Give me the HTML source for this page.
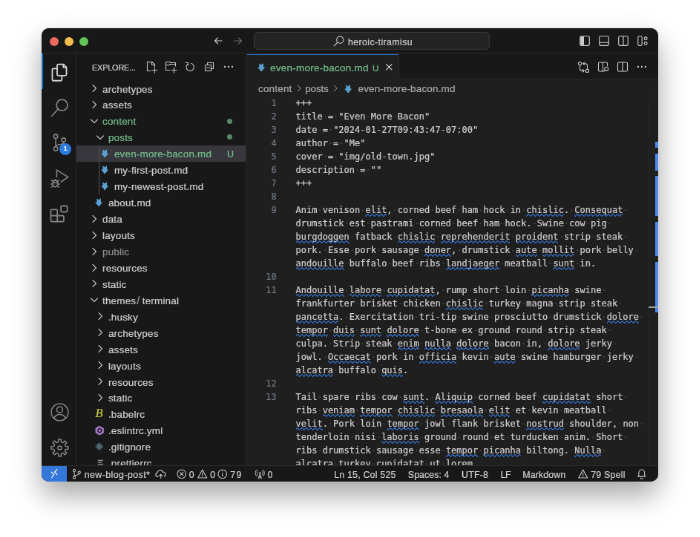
<!DOCTYPE html>
<html lang="en"><head><meta charset="utf-8"><title>heroic-tiramisu</title>
<style>
html,body{margin:0;padding:0;background:#fff;}
body{width:700px;height:537px;overflow:hidden;position:relative;font-family:"Liberation Sans",sans-serif;}
#sc{will-change:transform;position:absolute;left:0;top:0;width:943.40px;height:723.72px;transform:scale(0.742);transform-origin:0 0;}
#win{position:absolute;left:55.80px;top:38.27px;width:831.40px;height:611.05px;border-radius:10px;background:#1f1f1f;overflow:hidden;}
#sh{position:absolute;left:55.80px;top:38.27px;width:831.40px;height:611.05px;border-radius:10px;box-shadow:0 0 0 0.6px rgba(245,245,245,.55),0 18px 38px rgba(0,0,0,.36),0 0 2px rgba(0,0,0,.35);}
.b{position:absolute;}
.t{position:absolute;white-space:pre;line-height:20px;height:20px;-webkit-text-stroke:0.24px currentColor;}
.i{position:absolute;overflow:visible;}
.code{font-family:"DejaVu Sans Mono","Liberation Mono",monospace;font-size:12px;letter-spacing:0;color:#cccccc;}
.ln{font-family:"DejaVu Sans Mono","Liberation Mono",monospace;font-size:12px;color:#6e7681;text-align:right;}
.s{background:radial-gradient(circle at 50% 52%,#4a4a4a 0.7px,rgba(74,74,74,0) 1.2px);}
</style></head><body>
<div id="sc"><div id="sh"></div><div id="win">
<div class="b" style="left:0.00px;top:0.00px;width:831.40px;height:33.56px;background:#181818;"></div>
<div class="b" style="left:0.00px;top:32.56px;width:831.40px;height:1.00px;background:#2b2b2b;"></div>
<div class="b" style="left:0.00px;top:33.56px;width:47.04px;height:555.32px;background:#181818;"></div>
<div class="b" style="left:46.04px;top:33.56px;width:1.00px;height:555.32px;background:#2b2b2b;"></div>
<div class="b" style="left:47.04px;top:33.56px;width:229.18px;height:555.32px;background:#181818;"></div>
<div class="b" style="left:275.22px;top:33.56px;width:1.00px;height:555.32px;background:#2b2b2b;"></div>
<div class="b" style="left:276.21px;top:33.56px;width:555.19px;height:35.04px;background:#181818;"></div>
<div class="b" style="left:276.21px;top:67.60px;width:555.19px;height:1.00px;background:#2b2b2b;"></div>
<div class="b" style="left:276.21px;top:33.56px;width:205.73px;height:35.04px;background:#1f1f1f;"></div>
<div class="b" style="left:276.75px;top:34.64px;width:205.19px;height:1.21px;background:#2a6fc6;"></div>
<div class="b" style="left:480.94px;top:33.56px;width:1.00px;height:35.04px;background:#2b2b2b;"></div>
<div class="b" style="left:11.32px;top:11.65px;width:12px;height:12px;border-radius:50%;background:#ee6a5f;"></div>
<div class="b" style="left:31.26px;top:11.65px;width:12px;height:12px;border-radius:50%;background:#f5bd4f;"></div>
<div class="b" style="left:51.14px;top:11.65px;width:12px;height:12px;border-radius:50%;background:#61c454;"></div>
<svg class="i" style="left:230.68px;top:8.98px;color:#cccccc;" width="16" height="16" viewBox="0 0 16 16" fill="none" stroke="currentColor" stroke-width="1.1" stroke-linecap="round" stroke-linejoin="round"><path d="M13 8H3.5M7.5 4L3.5 8l4 4"/></svg>
<svg class="i" style="left:256.96px;top:8.98px;color:#6b6b6b;" width="16" height="16" viewBox="0 0 16 16" fill="none" stroke="currentColor" stroke-width="1.1" stroke-linecap="round" stroke-linejoin="round"><path d="M3 8h9.5M8.5 4l4 4-4 4"/></svg>
<div class="b" style="left:286.12px;top:5.12px;width:317.79px;height:23.99px;background:#242424;border:1px solid #3a3a3a;border-radius:6px;box-sizing:border-box;"></div>
<svg class="i" style="left:392.04px;top:8.48px;color:#cccccc;" width="17" height="17" viewBox="0 0 16 16" fill="none" stroke="currentColor" stroke-width="1.05" stroke-linecap="round" stroke-linejoin="round"><circle cx="9.700" cy="6.300" r="4.300"/><path d="M6.600 9.400L2 14"/></svg>
<span class="t " style="left:413.21px;top:8.67px;font-size:12.40px;letter-spacing:0.384px;color:#cccccc;">heroic-tiramisu</span>
<svg class="i" style="left:724.35px;top:8.31px;color:#cccccc;" width="16" height="16" viewBox="0 0 16 16" fill="none" stroke="currentColor" stroke-width="1.15" stroke-linecap="round" stroke-linejoin="round"><rect x="1.700" y="1.700" width="12.600" height="12.600" rx="2"/><path d="M2.200 2.200h4.800v11.600H2.200z" fill="currentColor" stroke="none"/></svg>
<svg class="i" style="left:750.49px;top:8.31px;color:#cccccc;" width="16" height="16" viewBox="0 0 16 16" fill="none" stroke="currentColor" stroke-width="1.15" stroke-linecap="round" stroke-linejoin="round"><rect x="1.700" y="1.700" width="12.600" height="12.600" rx="2"/><path d="M2 10.200h12"/></svg>
<svg class="i" style="left:776.64px;top:8.31px;color:#cccccc;" width="16" height="16" viewBox="0 0 16 16" fill="none" stroke="currentColor" stroke-width="1.15" stroke-linecap="round" stroke-linejoin="round"><rect x="1.700" y="1.700" width="12.600" height="12.600" rx="2"/><path d="M8 1.700v12.600"/></svg>
<svg class="i" style="left:802.65px;top:8.31px;color:#cccccc;" width="16" height="16" viewBox="0 0 16 16" fill="none" stroke="currentColor" stroke-width="1.15" stroke-linecap="round" stroke-linejoin="round"><rect x="1.800" y="1.700" width="5.400" height="12.600" rx="1.800"/><circle cx="12.200" cy="4.700" r="1.900"/><circle cx="12.200" cy="11.500" r="1.900"/></svg>
<div class="b" style="left:0.00px;top:34.23px;width:2.02px;height:47.98px;background:#0078d4;"></div>
<svg class="i" style="left:10.76px;top:45.26px;color:#d7d7d7;" width="27" height="27" viewBox="0 0 24 24" fill="none" stroke="currentColor" stroke-width="1.6" stroke-linecap="round" stroke-linejoin="round"><path d="M10.200 2.400h6.300l3.500 3.500v8.600a1.300 1.300 0 0 1-1.300 1.300h-8.500a1.300 1.300 0 0 1-1.300-1.300V3.700a1.300 1.300 0 0 1 1.300-1.300z"/><path d="M16.300 2.600v3.500h3.500"/><path d="M8.700 7.400H4.400a1.300 1.300 0 0 0-1.300 1.300v12a1.300 1.300 0 0 0 1.300 1.300h8.800a1.300 1.300 0 0 0 1.300-1.300v-4.700"/></svg>
<svg class="i" style="left:11.03px;top:93.24px;color:#868686;" width="27" height="27" viewBox="0 0 24 24" fill="none" stroke="currentColor" stroke-width="1.5" stroke-linecap="round" stroke-linejoin="round"><circle cx="14.750" cy="8.500" r="6.600"/><path d="M10 13.300L2.500 21.600"/></svg>
<svg class="i" style="left:10.76px;top:141.22px;color:#868686;" width="27" height="27" viewBox="0 0 24 24" fill="none" stroke="currentColor" stroke-width="1.4" stroke-linecap="round" stroke-linejoin="round"><circle cx="7.200" cy="4.300" r="2.400"/><circle cx="7.200" cy="19.100" r="2.400"/><circle cx="16.600" cy="8.500" r="2.400"/><path d="M7.200 6.700v10"/><path d="M16.600 10.900v.8c0 3.400-9.400 1-9.400 4.800"/></svg>
<div class="b" style="left:24.08px;top:154.40px;width:16px;height:16px;border-radius:50%;background:#2b7ce0;"></div>
<span class="t " style="left:29.78px;top:151.93px;font-size:9.50px;letter-spacing:0.000px;color:#ffffff;font-weight:bold;-webkit-text-stroke:0;">1</span>
<svg class="i" style="left:10.76px;top:189.20px;color:#868686;" width="27" height="27" viewBox="0 0 24 24" fill="none" stroke="currentColor" stroke-width="1.35" stroke-linecap="round" stroke-linejoin="round"><path d="M8.400 10.200V1.800L22 10.400l-8.400 5.600"/><ellipse cx="6.600" cy="18.200" rx="2.900" ry="3.800"/><path d="M3.900 17.200h5.400M3.700 18.600H1.300M9.500 18.600h2.400M4 15.800l-1.800-1.700M9.200 15.800l1.800-1.700M4 20.900l-1.800 1.500M9.200 20.900l1.800 1.500M4.800 14.800a1.900 1.900 0 0 1 3.600 0"/></svg>
<svg class="i" style="left:9.95px;top:237.04px;color:#868686;" width="27" height="27" viewBox="0 0 24 24" fill="none" stroke="currentColor" stroke-width="1.55" stroke-linecap="round" stroke-linejoin="round"><path d="M3.500 6.500h5.200a1.300 1.300 0 0 1 1.300 1.300v6h6.400a1.300 1.300 0 0 1 1.300 1.300v4.700a1.300 1.300 0 0 1-1.300 1.300H3.500a1.300 1.300 0 0 1-1.300-1.300V7.800a1.300 1.300 0 0 1 1.300-1.300z"/><path d="M2.200 13.800h7.800v7.300"/><rect x="14.300" y="2.200" width="7.600" height="7.200" rx="1.400"/></svg>
<svg class="i" style="left:10.76px;top:503.89px;color:#868686;" width="27" height="27" viewBox="0 0 24 24" fill="none" stroke="currentColor" stroke-width="1.35" stroke-linecap="round" stroke-linejoin="round"><circle cx="12" cy="12" r="10.200"/><circle cx="12" cy="9" r="3.500"/><path d="M5.200 19.500c1-3.300 3.600-4.800 6.800-4.800s5.800 1.500 6.800 4.800"/></svg>
<svg class="i" style="left:10.76px;top:551.86px;color:#868686;" width="27" height="27" viewBox="0 0 24 24" fill="none" stroke="currentColor" stroke-width="1.35" stroke-linecap="round" stroke-linejoin="round"><path d="M10.32 5.00L10.47 1.81L13.53 1.81L13.68 5.00L15.76 5.86L18.12 3.71L20.29 5.88L18.14 8.24L19.00 10.32L22.19 10.47L22.19 13.53L19.00 13.68L18.14 15.76L20.29 18.12L18.12 20.29L15.76 18.14L13.68 19.00L13.53 22.19L10.47 22.19L10.32 19.00L8.24 18.14L5.88 20.29L3.71 18.12L5.86 15.76L5.00 13.68L1.81 13.53L1.81 10.47L5.00 10.32L5.86 8.24L3.71 5.88L5.88 3.71L8.24 5.86Z"/><circle cx="12" cy="12" r="2.300"/></svg>
<span class="t " style="left:68.19px;top:42.56px;font-size:11.00px;letter-spacing:-0.251px;color:#cccccc;">EXPLORE...</span>
<svg class="i" style="left:140.11px;top:43.89px;color:#c5c5c5;" width="16" height="16" viewBox="0 0 16 16" fill="none" stroke="currentColor" stroke-width="1.1" stroke-linecap="round" stroke-linejoin="round"><path d="M9 1.500H2.500v12H7M9 1.500L12.500 5v2.500M8.500 1.500v4h4"/><path d="M12.500 9v7M9 12.500h7"/></svg>
<svg class="i" style="left:166.12px;top:43.89px;color:#c5c5c5;" width="16" height="16" viewBox="0 0 16 16" fill="none" stroke="currentColor" stroke-width="1.1" stroke-linecap="round" stroke-linejoin="round"><path d="M14.500 7V2.500H7.700l-1-1H1.500v11H7M1.500 5.500h5l1-1h7"/><path d="M12.500 9v7M9 12.500h7"/></svg>
<svg class="i" style="left:192.13px;top:43.89px;color:#c5c5c5;" width="16" height="16" viewBox="0 0 16 16" fill="none" stroke="currentColor" stroke-width="1.1" stroke-linecap="round" stroke-linejoin="round"><path d="M2 2.500h3.500V6"/><path d="M5 4.200a5.200 5.200 0 1 0 4.500-.9"/></svg>
<svg class="i" style="left:218.15px;top:43.89px;color:#c5c5c5;" width="16" height="16" viewBox="0 0 16 16" fill="none" stroke="currentColor" stroke-width="1.1" stroke-linecap="round" stroke-linejoin="round"><path d="M2.500 5.500h8v8h-8z"/><path d="M5.500 5.500V2.500h8v8h-3"/><path d="M4.300 9.500h4.400"/></svg>
<svg class="i" style="left:244.16px;top:44.16px;color:#d0d0d0;" width="16" height="16" viewBox="0 0 16 16" fill="none" stroke="currentColor" stroke-width="1.0" stroke-linecap="round" stroke-linejoin="round"><circle cx="3" cy="8" r="1.150" fill="currentColor" stroke="none"/><circle cx="8" cy="8" r="1.150" fill="currentColor" stroke="none"/><circle cx="13" cy="8" r="1.150" fill="currentColor" stroke="none"/></svg>
<div class="b" style="left:47.04px;top:157.67px;width:228.18px;height:21.94px;background:#37373d;"></div>
<div class="b" style="left:76.89px;top:157.67px;width:1.01px;height:65.83px;background:#585858;"></div>
<svg class="i" style="left:63.02px;top:72.86px;color:#c5c5c5;" width="16" height="16" viewBox="0 0 16 16" fill="none" stroke="currentColor" stroke-width="1.1" stroke-linecap="round" stroke-linejoin="round"><path d="M6 3.500l4.500 4.500L6 12.500"/></svg>
<span class="t " style="left:82.21px;top:72.28px;font-size:13.50px;letter-spacing:0.160px;color:#cccccc;">archetypes</span>
<svg class="i" style="left:63.02px;top:94.81px;color:#c5c5c5;" width="16" height="16" viewBox="0 0 16 16" fill="none" stroke="currentColor" stroke-width="1.1" stroke-linecap="round" stroke-linejoin="round"><path d="M6 3.500l4.500 4.500L6 12.500"/></svg>
<span class="t " style="left:82.21px;top:94.22px;font-size:13.50px;letter-spacing:0.160px;color:#cccccc;">assets</span>
<svg class="i" style="left:63.02px;top:116.75px;color:#c5c5c5;" width="16" height="16" viewBox="0 0 16 16" fill="none" stroke="currentColor" stroke-width="1.1" stroke-linecap="round" stroke-linejoin="round"><path d="M3.5 6l4.500 4.500L12.500 6"/></svg>
<span class="t " style="left:82.21px;top:116.17px;font-size:13.50px;letter-spacing:0.160px;color:#74bd8b;">content</span>
<div class="b" style="left:250.41px;top:121.25px;width:7px;height:7px;border-radius:50%;background:#588a66;"></div>
<svg class="i" style="left:70.98px;top:138.70px;color:#c5c5c5;" width="16" height="16" viewBox="0 0 16 16" fill="none" stroke="currentColor" stroke-width="1.1" stroke-linecap="round" stroke-linejoin="round"><path d="M3.5 6l4.500 4.500L12.500 6"/></svg>
<span class="t " style="left:90.16px;top:138.11px;font-size:13.50px;letter-spacing:0.160px;color:#74bd8b;">posts</span>
<div class="b" style="left:250.41px;top:143.20px;width:7px;height:7px;border-radius:50%;background:#588a66;"></div>
<svg class="i" style="left:80.51px;top:163.14px;" width="10.4" height="11.4" viewBox="0 0 10 11"><path d="M2.300 0.300L5 2.100 7.700 0.300V5.400H10L5 11 0 5.400H2.300z" fill="#5ba1d0"/></svg>
<span class="t " style="left:98.11px;top:160.06px;font-size:13.50px;letter-spacing:0.160px;color:#74bd8b;">even-more-bacon.md</span>
<span class="t " style="left:250.13px;top:160.06px;font-size:12.50px;letter-spacing:0.000px;color:#74bd8b;">U</span>
<svg class="i" style="left:80.51px;top:185.09px;" width="10.4" height="11.4" viewBox="0 0 10 11"><path d="M2.300 0.300L5 2.100 7.700 0.300V5.400H10L5 11 0 5.400H2.300z" fill="#5ba1d0"/></svg>
<span class="t " style="left:98.11px;top:182.00px;font-size:13.50px;letter-spacing:0.160px;color:#cccccc;">my-first-post.md</span>
<svg class="i" style="left:80.51px;top:207.03px;" width="10.4" height="11.4" viewBox="0 0 10 11"><path d="M2.300 0.300L5 2.100 7.700 0.300V5.400H10L5 11 0 5.400H2.300z" fill="#5ba1d0"/></svg>
<span class="t " style="left:98.11px;top:203.95px;font-size:13.50px;letter-spacing:0.160px;color:#cccccc;">my-newest-post.md</span>
<svg class="i" style="left:72.56px;top:228.98px;" width="10.4" height="11.4" viewBox="0 0 10 11"><path d="M2.300 0.300L5 2.100 7.700 0.300V5.400H10L5 11 0 5.400H2.300z" fill="#5ba1d0"/></svg>
<span class="t " style="left:90.16px;top:225.89px;font-size:13.50px;letter-spacing:0.160px;color:#cccccc;">about.md</span>
<svg class="i" style="left:63.02px;top:248.42px;color:#c5c5c5;" width="16" height="16" viewBox="0 0 16 16" fill="none" stroke="currentColor" stroke-width="1.1" stroke-linecap="round" stroke-linejoin="round"><path d="M6 3.500l4.500 4.500L6 12.500"/></svg>
<span class="t " style="left:82.21px;top:247.84px;font-size:13.50px;letter-spacing:0.160px;color:#cccccc;">data</span>
<svg class="i" style="left:63.02px;top:270.37px;color:#c5c5c5;" width="16" height="16" viewBox="0 0 16 16" fill="none" stroke="currentColor" stroke-width="1.1" stroke-linecap="round" stroke-linejoin="round"><path d="M6 3.500l4.500 4.500L6 12.500"/></svg>
<span class="t " style="left:82.21px;top:269.78px;font-size:13.50px;letter-spacing:0.160px;color:#cccccc;">layouts</span>
<svg class="i" style="left:63.02px;top:292.31px;color:#c5c5c5;" width="16" height="16" viewBox="0 0 16 16" fill="none" stroke="currentColor" stroke-width="1.1" stroke-linecap="round" stroke-linejoin="round"><path d="M6 3.500l4.500 4.500L6 12.500"/></svg>
<span class="t " style="left:82.21px;top:291.73px;font-size:13.50px;letter-spacing:0.160px;color:#8c8c8c;">public</span>
<svg class="i" style="left:63.02px;top:314.25px;color:#c5c5c5;" width="16" height="16" viewBox="0 0 16 16" fill="none" stroke="currentColor" stroke-width="1.1" stroke-linecap="round" stroke-linejoin="round"><path d="M6 3.500l4.500 4.500L6 12.500"/></svg>
<span class="t " style="left:82.21px;top:313.67px;font-size:13.50px;letter-spacing:0.160px;color:#cccccc;">resources</span>
<svg class="i" style="left:63.02px;top:336.20px;color:#c5c5c5;" width="16" height="16" viewBox="0 0 16 16" fill="none" stroke="currentColor" stroke-width="1.1" stroke-linecap="round" stroke-linejoin="round"><path d="M6 3.500l4.500 4.500L6 12.500"/></svg>
<span class="t " style="left:82.21px;top:335.61px;font-size:13.50px;letter-spacing:0.160px;color:#cccccc;">static</span>
<svg class="i" style="left:63.02px;top:358.14px;color:#c5c5c5;" width="16" height="16" viewBox="0 0 16 16" fill="none" stroke="currentColor" stroke-width="1.1" stroke-linecap="round" stroke-linejoin="round"><path d="M3.5 6l4.500 4.500L12.500 6"/></svg>
<span class="t " style="left:82.21px;top:357.56px;font-size:13.50px;letter-spacing:0.160px;color:#cccccc;">themes</span>
<span class="t " style="left:128.44px;top:357.15px;font-size:14.50px;letter-spacing:0.000px;color:#9a9a9a;">/</span>
<span class="t " style="left:135.98px;top:357.56px;font-size:13.50px;letter-spacing:0.160px;color:#cccccc;">terminal</span>
<svg class="i" style="left:70.98px;top:380.09px;color:#c5c5c5;" width="16" height="16" viewBox="0 0 16 16" fill="none" stroke="currentColor" stroke-width="1.1" stroke-linecap="round" stroke-linejoin="round"><path d="M6 3.500l4.500 4.500L6 12.500"/></svg>
<span class="t " style="left:90.16px;top:379.50px;font-size:13.50px;letter-spacing:0.160px;color:#cccccc;">.husky</span>
<svg class="i" style="left:70.98px;top:402.03px;color:#c5c5c5;" width="16" height="16" viewBox="0 0 16 16" fill="none" stroke="currentColor" stroke-width="1.1" stroke-linecap="round" stroke-linejoin="round"><path d="M6 3.500l4.500 4.500L6 12.500"/></svg>
<span class="t " style="left:90.16px;top:401.45px;font-size:13.50px;letter-spacing:0.160px;color:#cccccc;">archetypes</span>
<svg class="i" style="left:70.98px;top:423.98px;color:#c5c5c5;" width="16" height="16" viewBox="0 0 16 16" fill="none" stroke="currentColor" stroke-width="1.1" stroke-linecap="round" stroke-linejoin="round"><path d="M6 3.500l4.500 4.500L6 12.500"/></svg>
<span class="t " style="left:90.16px;top:423.39px;font-size:13.50px;letter-spacing:0.160px;color:#cccccc;">assets</span>
<svg class="i" style="left:70.98px;top:445.92px;color:#c5c5c5;" width="16" height="16" viewBox="0 0 16 16" fill="none" stroke="currentColor" stroke-width="1.1" stroke-linecap="round" stroke-linejoin="round"><path d="M6 3.500l4.500 4.500L6 12.500"/></svg>
<span class="t " style="left:90.16px;top:445.34px;font-size:13.50px;letter-spacing:0.160px;color:#cccccc;">layouts</span>
<svg class="i" style="left:70.98px;top:467.87px;color:#c5c5c5;" width="16" height="16" viewBox="0 0 16 16" fill="none" stroke="currentColor" stroke-width="1.1" stroke-linecap="round" stroke-linejoin="round"><path d="M6 3.500l4.500 4.500L6 12.500"/></svg>
<span class="t " style="left:90.16px;top:467.28px;font-size:13.50px;letter-spacing:0.160px;color:#cccccc;">resources</span>
<svg class="i" style="left:70.98px;top:489.81px;color:#c5c5c5;" width="16" height="16" viewBox="0 0 16 16" fill="none" stroke="currentColor" stroke-width="1.1" stroke-linecap="round" stroke-linejoin="round"><path d="M6 3.500l4.500 4.500L6 12.500"/></svg>
<span class="t " style="left:90.16px;top:489.23px;font-size:13.50px;letter-spacing:0.160px;color:#cccccc;">static</span>
<span class="t " style="left:72.78px;top:509.15px;font-size:16.50px;letter-spacing:0.000px;color:#cbcb41;font-style:italic;font-family:'Liberation Serif',serif;">B</span>
<span class="t " style="left:90.16px;top:511.17px;font-size:13.50px;letter-spacing:0.160px;color:#cccccc;">.babelrc</span>
<svg class="i" style="left:70.78px;top:534.45px;color:#a678cc;" width="14.5" height="14.5" viewBox="0 0 16 16" fill="none" stroke="currentColor" stroke-width="1" stroke-linecap="round" stroke-linejoin="round"><path d="M8 1.400l5.900 3.300v6.600L8 14.600l-5.900-3.300V4.700z" fill="#a678cc" stroke="#a678cc" stroke-width="0.8" stroke-linejoin="round"/><circle cx="8" cy="8" r="2.700" fill="none" stroke="#181818" stroke-width="1.500"/></svg>
<span class="t " style="left:90.16px;top:533.12px;font-size:13.50px;letter-spacing:0.160px;color:#cccccc;">.eslintrc.yml</span>
<svg class="i" style="left:70.55px;top:555.90px;color:#41535b;" width="15.5" height="15.5" viewBox="0 0 16 16" fill="none" stroke="currentColor" stroke-width="1" stroke-linecap="round" stroke-linejoin="round"><path d="M8 2.500l5.500 5.500-5.500 5.500-5.500-5.500z" fill="#455a64" stroke="#455a64" stroke-width="0.8"/><path d="M6.200 5.200l4.200 4.200M8.300 7.300l-2.200 2.800" stroke="#71848d" stroke-width="0.9"/></svg>
<span class="t " style="left:90.16px;top:555.06px;font-size:13.50px;letter-spacing:0.160px;color:#cccccc;">.gitignore</span>
<svg class="i" style="left:74.59px;top:578.51px;color:#c0c0c0;" width="12" height="12" viewBox="0 0 16 16" fill="none" stroke="currentColor" stroke-width="1.5" stroke-linecap="round" stroke-linejoin="round"><path d="M3 4.400h8.500M3 8h6M3 11.600h8.500"/></svg>
<span class="t " style="left:90.16px;top:577.01px;font-size:13.50px;letter-spacing:0.160px;color:#cccccc;">.prettierrc</span>
<svg class="i" style="left:291.03px;top:46.79px;" width="10.4" height="11.4" viewBox="0 0 10 11"><path d="M2.300 0.300L5 2.100 7.700 0.300V5.400H10L5 11 0 5.400H2.300z" fill="#5ba1d0"/></svg>
<span class="t " style="left:308.09px;top:43.71px;font-size:13.50px;letter-spacing:0.254px;color:#74bd8b;">even-more-bacon.md</span>
<span class="t " style="left:446.09px;top:43.71px;font-size:11.50px;letter-spacing:0.000px;color:#74bd8b;">U</span>
<svg class="i" style="left:460.81px;top:45.18px;color:#dddddd;" width="14.5" height="14.5" viewBox="0 0 16 16" fill="none" stroke="currentColor" stroke-width="1.35" stroke-linecap="round" stroke-linejoin="round"><path d="M4 4l8 8M12 4l-8 8"/></svg>
<svg class="i" style="left:722.50px;top:43.52px;color:#cccccc;" width="17" height="17" viewBox="0 0 16 16" fill="none" stroke="currentColor" stroke-width="1.05" stroke-linecap="round" stroke-linejoin="round"><circle cx="3.300" cy="3.400" r="2"/><circle cx="12.700" cy="12.600" r="2"/><path d="M3.300 5.400v4.600a2.500 2.500 0 0 0 2.500 2.500H8.600M7.100 10.900l1.600 1.600-1.600 1.600M12.700 10.600V6a2.500 2.500 0 0 0-2.500-2.500H7.400M8.900 1.900L7.300 3.500l1.600 1.600"/></svg>
<svg class="i" style="left:749.14px;top:44.02px;color:#cccccc;" width="16" height="16" viewBox="0 0 16 16" fill="none" stroke="currentColor" stroke-width="1.1" stroke-linecap="round" stroke-linejoin="round"><path d="M13.500 6.800V3.400a1.400 1.400 0 0 0-1.400-1.400H2.900a1.400 1.400 0 0 0-1.400 1.400v9.200a1.400 1.400 0 0 0 1.400 1.400H8.300M7.500 2v12"/><circle cx="12.300" cy="10.700" r="2.400"/><path d="M10.600 12.500l-1.600 1.700"/></svg>
<svg class="i" style="left:774.75px;top:44.02px;color:#cccccc;" width="16" height="16" viewBox="0 0 16 16" fill="none" stroke="currentColor" stroke-width="1.15" stroke-linecap="round" stroke-linejoin="round"><rect x="1.500" y="2" width="13" height="12" rx="1.500"/><path d="M8 2v12"/></svg>
<svg class="i" style="left:800.89px;top:44.02px;color:#d0d0d0;" width="16" height="16" viewBox="0 0 16 16" fill="none" stroke="currentColor" stroke-width="1.0" stroke-linecap="round" stroke-linejoin="round"><circle cx="3" cy="8" r="1.150" fill="currentColor" stroke="none"/><circle cx="8" cy="8" r="1.150" fill="currentColor" stroke="none"/><circle cx="13" cy="8" r="1.150" fill="currentColor" stroke="none"/></svg>
<span class="t " style="left:292.18px;top:72.01px;font-size:13.50px;letter-spacing:0.181px;color:#a9a9a9;">content</span>
<svg class="i" style="left:339.90px;top:74.00px;color:#a9a9a9;" width="14" height="14" viewBox="0 0 16 16" fill="none" stroke="currentColor" stroke-width="1.1" stroke-linecap="round" stroke-linejoin="round"><path d="M6 3.500l4.500 4.500L6 12.500"/></svg>
<span class="t " style="left:355.53px;top:72.14px;font-size:13.50px;letter-spacing:-0.200px;color:#a9a9a9;">posts</span>
<svg class="i" style="left:389.23px;top:74.00px;color:#a9a9a9;" width="14" height="14" viewBox="0 0 16 16" fill="none" stroke="currentColor" stroke-width="1.1" stroke-linecap="round" stroke-linejoin="round"><path d="M6 3.500l4.500 4.500L6 12.500"/></svg>
<svg class="i" style="left:408.41px;top:75.50px;" width="10.4" height="11.4" viewBox="0 0 10 11"><path d="M2.300 0.300L5 2.100 7.700 0.300V5.400H10L5 11 0 5.400H2.300z" fill="#5ba1d0"/></svg>
<span class="t " style="left:426.68px;top:72.14px;font-size:13.50px;letter-spacing:0.157px;color:#a9a9a9;">even-more-bacon.md</span>
<span class="t ln" style="left:276.98px;top:91.21px;width:40px;">1</span>
<span class="t code" style="left:342.72px;top:91.21px;">+++</span>
<span class="t ln" style="left:276.98px;top:109.21px;width:40px;">2</span>
<span class="t code" style="left:342.72px;top:109.21px;">title<span class="s"> </span>=<span class="s"> </span>"Even<span class="s"> </span>More<span class="s"> </span>Bacon"</span>
<span class="t ln" style="left:276.98px;top:127.21px;width:40px;">3</span>
<span class="t code" style="left:342.72px;top:127.21px;">date<span class="s"> </span>=<span class="s"> </span>"2024-01-27T09:43:47-07:00"</span>
<span class="t ln" style="left:276.98px;top:145.21px;width:40px;">4</span>
<span class="t code" style="left:342.72px;top:145.21px;">author<span class="s"> </span>=<span class="s"> </span>"Me"</span>
<span class="t ln" style="left:276.98px;top:163.21px;width:40px;">5</span>
<span class="t code" style="left:342.72px;top:163.21px;">cover<span class="s"> </span>=<span class="s"> </span>"img/old-town.jpg"</span>
<span class="t ln" style="left:276.98px;top:181.21px;width:40px;">6</span>
<span class="t code" style="left:342.72px;top:181.21px;">description<span class="s"> </span>=<span class="s"> </span>""</span>
<span class="t ln" style="left:276.98px;top:199.21px;width:40px;">7</span>
<span class="t code" style="left:342.72px;top:199.21px;">+++</span>
<span class="t ln" style="left:276.98px;top:217.21px;width:40px;">8</span>
<span class="t ln" style="left:276.98px;top:235.21px;width:40px;">9</span>
<span class="t code" style="left:342.72px;top:235.21px;">Anim<span class="s"> </span>venison<span class="s"> </span>elit,<span class="s"> </span>corned<span class="s"> </span>beef<span class="s"> </span>ham<span class="s"> </span>hock<span class="s"> </span>in<span class="s"> </span>chislic.<span class="s"> </span>Consequat<span class="s"> </span></span>
<span class="t code" style="left:342.72px;top:253.21px;">drumstick<span class="s"> </span>est<span class="s"> </span>pastrami<span class="s"> </span>corned<span class="s"> </span>beef<span class="s"> </span>ham<span class="s"> </span>hock.<span class="s"> </span>Swine<span class="s"> </span>cow<span class="s"> </span>pig<span class="s"> </span></span>
<span class="t code" style="left:342.72px;top:271.21px;">burgdoggen<span class="s"> </span>fatback<span class="s"> </span>chislic<span class="s"> </span>reprehenderit<span class="s"> </span>proident<span class="s"> </span>strip<span class="s"> </span>steak<span class="s"> </span></span>
<span class="t code" style="left:342.72px;top:289.21px;">pork.<span class="s"> </span>Esse<span class="s"> </span>pork<span class="s"> </span>sausage<span class="s"> </span>doner,<span class="s"> </span>drumstick<span class="s"> </span>aute<span class="s"> </span>mollit<span class="s"> </span>pork<span class="s"> </span>belly<span class="s"> </span></span>
<span class="t code" style="left:342.72px;top:307.21px;">andouille<span class="s"> </span>buffalo<span class="s"> </span>beef<span class="s"> </span>ribs<span class="s"> </span>landjaeger<span class="s"> </span>meatball<span class="s"> </span>sunt<span class="s"> </span>in.</span>
<span class="t ln" style="left:276.98px;top:325.21px;width:40px;">10</span>
<span class="t ln" style="left:276.98px;top:343.21px;width:40px;">11</span>
<span class="t code" style="left:342.72px;top:343.21px;">Andouille<span class="s"> </span>labore<span class="s"> </span>cupidatat,<span class="s"> </span>rump<span class="s"> </span>short<span class="s"> </span>loin<span class="s"> </span>picanha<span class="s"> </span>swine<span class="s"> </span></span>
<span class="t code" style="left:342.72px;top:361.21px;">frankfurter<span class="s"> </span>brisket<span class="s"> </span>chicken<span class="s"> </span>chislic<span class="s"> </span>turkey<span class="s"> </span>magna<span class="s"> </span>strip<span class="s"> </span>steak<span class="s"> </span></span>
<span class="t code" style="left:342.72px;top:379.21px;">pancetta.<span class="s"> </span>Exercitation<span class="s"> </span>tri-tip<span class="s"> </span>swine<span class="s"> </span>prosciutto<span class="s"> </span>drumstick<span class="s"> </span>dolore<span class="s"> </span></span>
<span class="t code" style="left:342.72px;top:397.21px;">tempor<span class="s"> </span>duis<span class="s"> </span>sunt<span class="s"> </span>dolore<span class="s"> </span>t-bone<span class="s"> </span>ex<span class="s"> </span>ground<span class="s"> </span>round<span class="s"> </span>strip<span class="s"> </span>steak<span class="s"> </span></span>
<span class="t code" style="left:342.72px;top:415.21px;">culpa.<span class="s"> </span>Strip<span class="s"> </span>steak<span class="s"> </span>enim<span class="s"> </span>nulla<span class="s"> </span>dolore<span class="s"> </span>bacon<span class="s"> </span>in,<span class="s"> </span>dolore<span class="s"> </span>jerky<span class="s"> </span></span>
<span class="t code" style="left:342.72px;top:433.21px;">jowl.<span class="s"> </span>Occaecat<span class="s"> </span>pork<span class="s"> </span>in<span class="s"> </span>officia<span class="s"> </span>kevin<span class="s"> </span>aute<span class="s"> </span>swine<span class="s"> </span>hamburger<span class="s"> </span>jerky<span class="s"> </span></span>
<span class="t code" style="left:342.72px;top:451.21px;">alcatra<span class="s"> </span>buffalo<span class="s"> </span>quis.</span>
<span class="t ln" style="left:276.98px;top:469.21px;width:40px;">12</span>
<span class="t ln" style="left:276.98px;top:487.21px;width:40px;">13</span>
<span class="t code" style="left:342.72px;top:487.21px;">Tail<span class="s"> </span>spare<span class="s"> </span>ribs<span class="s"> </span>cow<span class="s"> </span>sunt.<span class="s"> </span>Aliquip<span class="s"> </span>corned<span class="s"> </span>beef<span class="s"> </span>cupidatat<span class="s"> </span>short<span class="s"> </span></span>
<span class="t code" style="left:342.72px;top:505.21px;">ribs<span class="s"> </span>veniam<span class="s"> </span>tempor<span class="s"> </span>chislic<span class="s"> </span>bresaola<span class="s"> </span>elit<span class="s"> </span>et<span class="s"> </span>kevin<span class="s"> </span>meatball<span class="s"> </span></span>
<span class="t code" style="left:342.72px;top:523.21px;">velit.<span class="s"> </span>Pork<span class="s"> </span>loin<span class="s"> </span>tempor<span class="s"> </span>jowl<span class="s"> </span>flank<span class="s"> </span>brisket<span class="s"> </span>nostrud<span class="s"> </span>shoulder,<span class="s"> </span>non<span class="s"> </span></span>
<span class="t code" style="left:342.72px;top:541.21px;">tenderloin<span class="s"> </span>nisi<span class="s"> </span>laboris<span class="s"> </span>ground<span class="s"> </span>round<span class="s"> </span>et<span class="s"> </span>turducken<span class="s"> </span>anim.<span class="s"> </span>Short<span class="s"> </span></span>
<span class="t code" style="left:342.72px;top:559.21px;">ribs<span class="s"> </span>drumstick<span class="s"> </span>sausage<span class="s"> </span>esse<span class="s"> </span>tempor<span class="s"> </span>picanha<span class="s"> </span>biltong.<span class="s"> </span>Nulla<span class="s"> </span></span>
<span class="t code" style="left:342.72px;top:577.21px;">alcatra<span class="s"> </span>turkey<span class="s"> </span>cupidatat<span class="s"> </span>ut<span class="s"> </span>lorem.</span>
<svg class="i" style="left:436.63px;top:249.95px;overflow:hidden;" width="28.90" height="4" viewBox="436.63 249.95 28.90 4"><path d="M425.47 253.45L428.47 250.45L431.47 253.45L434.47 250.45L437.47 253.45L440.47 250.45L443.47 253.45L446.47 250.45L449.47 253.45L452.47 250.45L455.47 253.45L458.47 250.45L461.47 253.45L464.47 250.45L467.47 253.45L470.47 250.45" fill="none" stroke="#3a82ee" stroke-width="1.05"/></svg>
<svg class="i" style="left:653.35px;top:249.95px;overflow:hidden;" width="50.57" height="4" viewBox="653.35 249.95 50.57 4"><path d="M641.47 253.45L644.47 250.45L647.47 253.45L650.47 250.45L653.47 253.45L656.47 250.45L659.47 253.45L662.47 250.45L665.47 253.45L668.47 250.45L671.47 253.45L674.47 250.45L677.47 253.45L680.47 250.45L683.47 253.45L686.47 250.45L689.47 253.45L692.47 250.45L695.47 253.45L698.47 250.45L701.47 253.45L704.47 250.45L707.47 253.45" fill="none" stroke="#3a82ee" stroke-width="1.05"/></svg>
<svg class="i" style="left:718.37px;top:249.95px;overflow:hidden;" width="65.02" height="4" viewBox="718.37 249.95 65.02 4"><path d="M707.47 253.45L710.47 250.45L713.47 253.45L716.47 250.45L719.47 253.45L722.47 250.45L725.47 253.45L728.47 250.45L731.47 253.45L734.47 250.45L737.47 253.45L740.47 250.45L743.47 253.45L746.47 250.45L749.47 253.45L752.47 250.45L755.47 253.45L758.47 250.45L761.47 253.45L764.47 250.45L767.47 253.45L770.47 250.45L773.47 253.45L776.47 250.45L779.47 253.45L782.47 250.45L785.47 253.45L788.47 250.45" fill="none" stroke="#3a82ee" stroke-width="1.05"/></svg>
<svg class="i" style="left:342.72px;top:285.95px;overflow:hidden;" width="72.24" height="4" viewBox="342.72 285.95 72.24 4"><path d="M335.47 289.45L338.47 286.45L341.47 289.45L344.47 286.45L347.47 289.45L350.47 286.45L353.47 289.45L356.47 286.45L359.47 289.45L362.47 286.45L365.47 289.45L368.47 286.45L371.47 289.45L374.47 286.45L377.47 289.45L380.47 286.45L383.47 289.45L386.47 286.45L389.47 289.45L392.47 286.45L395.47 289.45L398.47 286.45L401.47 289.45L404.47 286.45L407.47 289.45L410.47 286.45L413.47 289.45L416.47 286.45L419.47 289.45" fill="none" stroke="#3a82ee" stroke-width="1.05"/></svg>
<svg class="i" style="left:479.98px;top:285.95px;overflow:hidden;" width="50.57" height="4" viewBox="479.98 285.95 50.57 4"><path d="M467.47 289.45L470.47 286.45L473.47 289.45L476.47 286.45L479.47 289.45L482.47 286.45L485.47 289.45L488.47 286.45L491.47 289.45L494.47 286.45L497.47 289.45L500.47 286.45L503.47 289.45L506.47 286.45L509.47 289.45L512.47 286.45L515.47 289.45L518.47 286.45L521.47 289.45L524.47 286.45L527.47 289.45L530.47 286.45L533.47 289.45L536.47 286.45" fill="none" stroke="#3a82ee" stroke-width="1.05"/></svg>
<svg class="i" style="left:537.77px;top:285.95px;overflow:hidden;" width="93.91" height="4" viewBox="537.77 285.95 93.91 4"><path d="M527.47 289.45L530.47 286.45L533.47 289.45L536.47 286.45L539.47 289.45L542.47 286.45L545.47 289.45L548.47 286.45L551.47 289.45L554.47 286.45L557.47 289.45L560.47 286.45L563.47 289.45L566.47 286.45L569.47 289.45L572.47 286.45L575.47 289.45L578.47 286.45L581.47 289.45L584.47 286.45L587.47 289.45L590.47 286.45L593.47 289.45L596.47 286.45L599.47 289.45L602.47 286.45L605.47 289.45L608.47 286.45L611.47 289.45L614.47 286.45L617.47 289.45L620.47 286.45L623.47 289.45L626.47 286.45L629.47 289.45L632.47 286.45L635.47 289.45" fill="none" stroke="#3a82ee" stroke-width="1.05"/></svg>
<svg class="i" style="left:638.90px;top:285.95px;overflow:hidden;" width="57.79" height="4" viewBox="638.90 285.95 57.79 4"><path d="M629.47 289.45L632.47 286.45L635.47 289.45L638.47 286.45L641.47 289.45L644.47 286.45L647.47 289.45L650.47 286.45L653.47 289.45L656.47 286.45L659.47 289.45L662.47 286.45L665.47 289.45L668.47 286.45L671.47 289.45L674.47 286.45L677.47 289.45L680.47 286.45L683.47 289.45L686.47 286.45L689.47 289.45L692.47 286.45L695.47 289.45L698.47 286.45L701.47 289.45" fill="none" stroke="#3a82ee" stroke-width="1.05"/></svg>
<svg class="i" style="left:516.10px;top:303.95px;overflow:hidden;" width="36.12" height="4" viewBox="516.10 303.95 36.12 4"><path d="M503.47 307.45L506.47 304.45L509.47 307.45L512.47 304.45L515.47 307.45L518.47 304.45L521.47 307.45L524.47 304.45L527.47 307.45L530.47 304.45L533.47 307.45L536.47 304.45L539.47 307.45L542.47 304.45L545.47 307.45L548.47 304.45L551.47 307.45L554.47 304.45L557.47 307.45" fill="none" stroke="#3a82ee" stroke-width="1.05"/></svg>
<svg class="i" style="left:638.90px;top:303.95px;overflow:hidden;" width="28.90" height="4" viewBox="638.90 303.95 28.90 4"><path d="M629.47 307.45L632.47 304.45L635.47 307.45L638.47 304.45L641.47 307.45L644.47 304.45L647.47 307.45L650.47 304.45L653.47 307.45L656.47 304.45L659.47 307.45L662.47 304.45L665.47 307.45L668.47 304.45L671.47 307.45" fill="none" stroke="#3a82ee" stroke-width="1.05"/></svg>
<svg class="i" style="left:675.02px;top:303.95px;overflow:hidden;" width="43.34" height="4" viewBox="675.02 303.95 43.34 4"><path d="M665.47 307.45L668.47 304.45L671.47 307.45L674.47 304.45L677.47 307.45L680.47 304.45L683.47 307.45L686.47 304.45L689.47 307.45L692.47 304.45L695.47 307.45L698.47 304.45L701.47 307.45L704.47 304.45L707.47 307.45L710.47 304.45L713.47 307.45L716.47 304.45L719.47 307.45L722.47 304.45" fill="none" stroke="#3a82ee" stroke-width="1.05"/></svg>
<svg class="i" style="left:342.72px;top:321.95px;overflow:hidden;" width="65.02" height="4" viewBox="342.72 321.95 65.02 4"><path d="M335.47 325.45L338.47 322.45L341.47 325.45L344.47 322.45L347.47 325.45L350.47 322.45L353.47 325.45L356.47 322.45L359.47 325.45L362.47 322.45L365.47 325.45L368.47 322.45L371.47 325.45L374.47 322.45L377.47 325.45L380.47 322.45L383.47 325.45L386.47 322.45L389.47 325.45L392.47 322.45L395.47 325.45L398.47 322.45L401.47 325.45L404.47 322.45L407.47 325.45L410.47 322.45L413.47 325.45" fill="none" stroke="#3a82ee" stroke-width="1.05"/></svg>
<svg class="i" style="left:544.99px;top:321.95px;overflow:hidden;" width="72.24" height="4" viewBox="544.99 321.95 72.24 4"><path d="M533.47 325.45L536.47 322.45L539.47 325.45L542.47 322.45L545.47 325.45L548.47 322.45L551.47 325.45L554.47 322.45L557.47 325.45L560.47 322.45L563.47 325.45L566.47 322.45L569.47 325.45L572.47 322.45L575.47 325.45L578.47 322.45L581.47 325.45L584.47 322.45L587.47 325.45L590.47 322.45L593.47 325.45L596.47 322.45L599.47 325.45L602.47 322.45L605.47 325.45L608.47 322.45L611.47 325.45L614.47 322.45L617.47 325.45L620.47 322.45" fill="none" stroke="#3a82ee" stroke-width="1.05"/></svg>
<svg class="i" style="left:689.47px;top:321.95px;overflow:hidden;" width="28.90" height="4" viewBox="689.47 321.95 28.90 4"><path d="M677.47 325.45L680.47 322.45L683.47 325.45L686.47 322.45L689.47 325.45L692.47 322.45L695.47 325.45L698.47 322.45L701.47 325.45L704.47 322.45L707.47 325.45L710.47 322.45L713.47 325.45L716.47 322.45L719.47 325.45L722.47 322.45" fill="none" stroke="#3a82ee" stroke-width="1.05"/></svg>
<svg class="i" style="left:342.72px;top:357.95px;overflow:hidden;" width="65.02" height="4" viewBox="342.72 357.95 65.02 4"><path d="M335.47 361.45L338.47 358.45L341.47 361.45L344.47 358.45L347.47 361.45L350.47 358.45L353.47 361.45L356.47 358.45L359.47 361.45L362.47 358.45L365.47 361.45L368.47 358.45L371.47 361.45L374.47 358.45L377.47 361.45L380.47 358.45L383.47 361.45L386.47 358.45L389.47 361.45L392.47 358.45L395.47 361.45L398.47 358.45L401.47 361.45L404.47 358.45L407.47 361.45L410.47 358.45L413.47 361.45" fill="none" stroke="#3a82ee" stroke-width="1.05"/></svg>
<svg class="i" style="left:414.96px;top:357.95px;overflow:hidden;" width="43.34" height="4" viewBox="414.96 357.95 43.34 4"><path d="M407.47 361.45L410.47 358.45L413.47 361.45L416.47 358.45L419.47 361.45L422.47 358.45L425.47 361.45L428.47 358.45L431.47 361.45L434.47 358.45L437.47 361.45L440.47 358.45L443.47 361.45L446.47 358.45L449.47 361.45L452.47 358.45L455.47 361.45L458.47 358.45L461.47 361.45" fill="none" stroke="#3a82ee" stroke-width="1.05"/></svg>
<svg class="i" style="left:465.53px;top:357.95px;overflow:hidden;" width="65.02" height="4" viewBox="465.53 357.95 65.02 4"><path d="M455.47 361.45L458.47 358.45L461.47 361.45L464.47 358.45L467.47 361.45L470.47 358.45L473.47 361.45L476.47 358.45L479.47 361.45L482.47 358.45L485.47 361.45L488.47 358.45L491.47 361.45L494.47 358.45L497.47 361.45L500.47 358.45L503.47 361.45L506.47 358.45L509.47 361.45L512.47 358.45L515.47 361.45L518.47 358.45L521.47 361.45L524.47 358.45L527.47 361.45L530.47 358.45L533.47 361.45L536.47 358.45" fill="none" stroke="#3a82ee" stroke-width="1.05"/></svg>
<svg class="i" style="left:660.58px;top:357.95px;overflow:hidden;" width="50.57" height="4" viewBox="660.58 357.95 50.57 4"><path d="M647.47 361.45L650.47 358.45L653.47 361.45L656.47 358.45L659.47 361.45L662.47 358.45L665.47 361.45L668.47 358.45L671.47 361.45L674.47 358.45L677.47 361.45L680.47 358.45L683.47 361.45L686.47 358.45L689.47 361.45L692.47 358.45L695.47 361.45L698.47 358.45L701.47 361.45L704.47 358.45L707.47 361.45L710.47 358.45L713.47 361.45L716.47 358.45" fill="none" stroke="#3a82ee" stroke-width="1.05"/></svg>
<svg class="i" style="left:544.99px;top:375.95px;overflow:hidden;" width="50.57" height="4" viewBox="544.99 375.95 50.57 4"><path d="M533.47 379.45L536.47 376.45L539.47 379.45L542.47 376.45L545.47 379.45L548.47 376.45L551.47 379.45L554.47 376.45L557.47 379.45L560.47 376.45L563.47 379.45L566.47 376.45L569.47 379.45L572.47 376.45L575.47 379.45L578.47 376.45L581.47 379.45L584.47 376.45L587.47 379.45L590.47 376.45L593.47 379.45L596.47 376.45L599.47 379.45" fill="none" stroke="#3a82ee" stroke-width="1.05"/></svg>
<svg class="i" style="left:342.72px;top:393.95px;overflow:hidden;" width="57.79" height="4" viewBox="342.72 393.95 57.79 4"><path d="M335.47 397.45L338.47 394.45L341.47 397.45L344.47 394.45L347.47 397.45L350.47 394.45L353.47 397.45L356.47 394.45L359.47 397.45L362.47 394.45L365.47 397.45L368.47 394.45L371.47 397.45L374.47 394.45L377.47 397.45L380.47 394.45L383.47 397.45L386.47 394.45L389.47 397.45L392.47 394.45L395.47 397.45L398.47 394.45L401.47 397.45L404.47 394.45" fill="none" stroke="#3a82ee" stroke-width="1.05"/></svg>
<svg class="i" style="left:761.71px;top:393.95px;overflow:hidden;" width="43.34" height="4" viewBox="761.71 393.95 43.34 4"><path d="M749.47 397.45L752.47 394.45L755.47 397.45L758.47 394.45L761.47 397.45L764.47 394.45L767.47 397.45L770.47 394.45L773.47 397.45L776.47 394.45L779.47 397.45L782.47 394.45L785.47 397.45L788.47 394.45L791.47 397.45L794.47 394.45L797.47 397.45L800.47 394.45L803.47 397.45L806.47 394.45L809.47 397.45" fill="none" stroke="#3a82ee" stroke-width="1.05"/></svg>
<svg class="i" style="left:342.72px;top:411.95px;overflow:hidden;" width="43.34" height="4" viewBox="342.72 411.95 43.34 4"><path d="M335.47 415.45L338.47 412.45L341.47 415.45L344.47 412.45L347.47 415.45L350.47 412.45L353.47 415.45L356.47 412.45L359.47 415.45L362.47 412.45L365.47 415.45L368.47 412.45L371.47 415.45L374.47 412.45L377.47 415.45L380.47 412.45L383.47 415.45L386.47 412.45L389.47 415.45" fill="none" stroke="#3a82ee" stroke-width="1.05"/></svg>
<svg class="i" style="left:393.29px;top:411.95px;overflow:hidden;" width="28.90" height="4" viewBox="393.29 411.95 28.90 4"><path d="M383.47 415.45L386.47 412.45L389.47 415.45L392.47 412.45L395.47 415.45L398.47 412.45L401.47 415.45L404.47 412.45L407.47 415.45L410.47 412.45L413.47 415.45L416.47 412.45L419.47 415.45L422.47 412.45L425.47 415.45" fill="none" stroke="#3a82ee" stroke-width="1.05"/></svg>
<svg class="i" style="left:429.41px;top:411.95px;overflow:hidden;" width="28.90" height="4" viewBox="429.41 411.95 28.90 4"><path d="M419.47 415.45L422.47 412.45L425.47 415.45L428.47 412.45L431.47 415.45L434.47 412.45L437.47 415.45L440.47 412.45L443.47 415.45L446.47 412.45L449.47 415.45L452.47 412.45L455.47 415.45L458.47 412.45L461.47 415.45" fill="none" stroke="#3a82ee" stroke-width="1.05"/></svg>
<svg class="i" style="left:465.53px;top:411.95px;overflow:hidden;" width="43.34" height="4" viewBox="465.53 411.95 43.34 4"><path d="M455.47 415.45L458.47 412.45L461.47 415.45L464.47 412.45L467.47 415.45L470.47 412.45L473.47 415.45L476.47 412.45L479.47 415.45L482.47 412.45L485.47 415.45L488.47 412.45L491.47 415.45L494.47 412.45L497.47 415.45L500.47 412.45L503.47 415.45L506.47 412.45L509.47 415.45L512.47 412.45" fill="none" stroke="#3a82ee" stroke-width="1.05"/></svg>
<svg class="i" style="left:479.98px;top:429.95px;overflow:hidden;" width="28.90" height="4" viewBox="479.98 429.95 28.90 4"><path d="M467.47 433.45L470.47 430.45L473.47 433.45L476.47 430.45L479.47 433.45L482.47 430.45L485.47 433.45L488.47 430.45L491.47 433.45L494.47 430.45L497.47 433.45L500.47 430.45L503.47 433.45L506.47 430.45L509.47 433.45L512.47 430.45" fill="none" stroke="#3a82ee" stroke-width="1.05"/></svg>
<svg class="i" style="left:516.10px;top:429.95px;overflow:hidden;" width="36.12" height="4" viewBox="516.10 429.95 36.12 4"><path d="M503.47 433.45L506.47 430.45L509.47 433.45L512.47 430.45L515.47 433.45L518.47 430.45L521.47 433.45L524.47 430.45L527.47 433.45L530.47 430.45L533.47 433.45L536.47 430.45L539.47 433.45L542.47 430.45L545.47 433.45L548.47 430.45L551.47 433.45L554.47 430.45L557.47 433.45" fill="none" stroke="#3a82ee" stroke-width="1.05"/></svg>
<svg class="i" style="left:559.44px;top:429.95px;overflow:hidden;" width="43.34" height="4" viewBox="559.44 429.95 43.34 4"><path d="M551.47 433.45L554.47 430.45L557.47 433.45L560.47 430.45L563.47 433.45L566.47 430.45L569.47 433.45L572.47 430.45L575.47 433.45L578.47 430.45L581.47 433.45L584.47 430.45L587.47 433.45L590.47 430.45L593.47 433.45L596.47 430.45L599.47 433.45L602.47 430.45L605.47 433.45L608.47 430.45" fill="none" stroke="#3a82ee" stroke-width="1.05"/></svg>
<svg class="i" style="left:682.25px;top:429.95px;overflow:hidden;" width="43.34" height="4" viewBox="682.25 429.95 43.34 4"><path d="M671.47 433.45L674.47 430.45L677.47 433.45L680.47 430.45L683.47 433.45L686.47 430.45L689.47 433.45L692.47 430.45L695.47 433.45L698.47 430.45L701.47 433.45L704.47 430.45L707.47 433.45L710.47 430.45L713.47 433.45L716.47 430.45L719.47 433.45L722.47 430.45L725.47 433.45L728.47 430.45L731.47 433.45" fill="none" stroke="#3a82ee" stroke-width="1.05"/></svg>
<svg class="i" style="left:386.06px;top:447.95px;overflow:hidden;" width="57.79" height="4" viewBox="386.06 447.95 57.79 4"><path d="M377.47 451.45L380.47 448.45L383.47 451.45L386.47 448.45L389.47 451.45L392.47 448.45L395.47 451.45L398.47 448.45L401.47 451.45L404.47 448.45L407.47 451.45L410.47 448.45L413.47 451.45L416.47 448.45L419.47 451.45L422.47 448.45L425.47 451.45L428.47 448.45L431.47 451.45L434.47 448.45L437.47 451.45L440.47 448.45L443.47 451.45L446.47 448.45L449.47 451.45" fill="none" stroke="#3a82ee" stroke-width="1.05"/></svg>
<svg class="i" style="left:508.87px;top:447.95px;overflow:hidden;" width="50.57" height="4" viewBox="508.87 447.95 50.57 4"><path d="M497.47 451.45L500.47 448.45L503.47 451.45L506.47 448.45L509.47 451.45L512.47 448.45L515.47 451.45L518.47 448.45L521.47 451.45L524.47 448.45L527.47 451.45L530.47 448.45L533.47 451.45L536.47 448.45L539.47 451.45L542.47 448.45L545.47 451.45L548.47 448.45L551.47 451.45L554.47 448.45L557.47 451.45L560.47 448.45L563.47 451.45" fill="none" stroke="#3a82ee" stroke-width="1.05"/></svg>
<svg class="i" style="left:610.01px;top:447.95px;overflow:hidden;" width="28.90" height="4" viewBox="610.01 447.95 28.90 4"><path d="M599.47 451.45L602.47 448.45L605.47 451.45L608.47 448.45L611.47 451.45L614.47 448.45L617.47 451.45L620.47 448.45L623.47 451.45L626.47 448.45L629.47 451.45L632.47 448.45L635.47 451.45L638.47 448.45L641.47 451.45L644.47 448.45" fill="none" stroke="#3a82ee" stroke-width="1.05"/></svg>
<svg class="i" style="left:342.72px;top:465.95px;overflow:hidden;" width="50.57" height="4" viewBox="342.72 465.95 50.57 4"><path d="M335.47 469.45L338.47 466.45L341.47 469.45L344.47 466.45L347.47 469.45L350.47 466.45L353.47 469.45L356.47 466.45L359.47 469.45L362.47 466.45L365.47 469.45L368.47 466.45L371.47 469.45L374.47 466.45L377.47 469.45L380.47 466.45L383.47 469.45L386.47 466.45L389.47 469.45L392.47 466.45L395.47 469.45L398.47 466.45" fill="none" stroke="#3a82ee" stroke-width="1.05"/></svg>
<svg class="i" style="left:458.30px;top:465.95px;overflow:hidden;" width="28.90" height="4" viewBox="458.30 465.95 28.90 4"><path d="M449.47 469.45L452.47 466.45L455.47 469.45L458.47 466.45L461.47 469.45L464.47 466.45L467.47 469.45L470.47 466.45L473.47 469.45L476.47 466.45L479.47 469.45L482.47 466.45L485.47 469.45L488.47 466.45L491.47 469.45" fill="none" stroke="#3a82ee" stroke-width="1.05"/></svg>
<svg class="i" style="left:487.20px;top:501.95px;overflow:hidden;" width="28.90" height="4" viewBox="487.20 501.95 28.90 4"><path d="M479.47 505.45L482.47 502.45L485.47 505.45L488.47 502.45L491.47 505.45L494.47 502.45L497.47 505.45L500.47 502.45L503.47 505.45L506.47 502.45L509.47 505.45L512.47 502.45L515.47 505.45L518.47 502.45L521.47 505.45" fill="none" stroke="#3a82ee" stroke-width="1.05"/></svg>
<svg class="i" style="left:530.54px;top:501.95px;overflow:hidden;" width="50.57" height="4" viewBox="530.54 501.95 50.57 4"><path d="M521.47 505.45L524.47 502.45L527.47 505.45L530.47 502.45L533.47 505.45L536.47 502.45L539.47 505.45L542.47 502.45L545.47 505.45L548.47 502.45L551.47 505.45L554.47 502.45L557.47 505.45L560.47 502.45L563.47 505.45L566.47 502.45L569.47 505.45L572.47 502.45L575.47 505.45L578.47 502.45L581.47 505.45L584.47 502.45" fill="none" stroke="#3a82ee" stroke-width="1.05"/></svg>
<svg class="i" style="left:675.02px;top:501.95px;overflow:hidden;" width="65.02" height="4" viewBox="675.02 501.95 65.02 4"><path d="M665.47 505.45L668.47 502.45L671.47 505.45L674.47 502.45L677.47 505.45L680.47 502.45L683.47 505.45L686.47 502.45L689.47 505.45L692.47 502.45L695.47 505.45L698.47 502.45L701.47 505.45L704.47 502.45L707.47 505.45L710.47 502.45L713.47 505.45L716.47 502.45L719.47 505.45L722.47 502.45L725.47 505.45L728.47 502.45L731.47 505.45L734.47 502.45L737.47 505.45L740.47 502.45L743.47 505.45" fill="none" stroke="#3a82ee" stroke-width="1.05"/></svg>
<svg class="i" style="left:378.84px;top:519.95px;overflow:hidden;" width="43.34" height="4" viewBox="378.84 519.95 43.34 4"><path d="M371.47 523.45L374.47 520.45L377.47 523.45L380.47 520.45L383.47 523.45L386.47 520.45L389.47 523.45L392.47 520.45L395.47 523.45L398.47 520.45L401.47 523.45L404.47 520.45L407.47 523.45L410.47 520.45L413.47 523.45L416.47 520.45L419.47 523.45L422.47 520.45L425.47 523.45" fill="none" stroke="#3a82ee" stroke-width="1.05"/></svg>
<svg class="i" style="left:429.41px;top:519.95px;overflow:hidden;" width="43.34" height="4" viewBox="429.41 519.95 43.34 4"><path d="M419.47 523.45L422.47 520.45L425.47 523.45L428.47 520.45L431.47 523.45L434.47 520.45L437.47 523.45L440.47 520.45L443.47 523.45L446.47 520.45L449.47 523.45L452.47 520.45L455.47 523.45L458.47 520.45L461.47 523.45L464.47 520.45L467.47 523.45L470.47 520.45L473.47 523.45L476.47 520.45" fill="none" stroke="#3a82ee" stroke-width="1.05"/></svg>
<svg class="i" style="left:479.98px;top:519.95px;overflow:hidden;" width="50.57" height="4" viewBox="479.98 519.95 50.57 4"><path d="M467.47 523.45L470.47 520.45L473.47 523.45L476.47 520.45L479.47 523.45L482.47 520.45L485.47 523.45L488.47 520.45L491.47 523.45L494.47 520.45L497.47 523.45L500.47 520.45L503.47 523.45L506.47 520.45L509.47 523.45L512.47 520.45L515.47 523.45L518.47 520.45L521.47 523.45L524.47 520.45L527.47 523.45L530.47 520.45L533.47 523.45L536.47 520.45" fill="none" stroke="#3a82ee" stroke-width="1.05"/></svg>
<svg class="i" style="left:537.77px;top:519.95px;overflow:hidden;" width="57.79" height="4" viewBox="537.77 519.95 57.79 4"><path d="M527.47 523.45L530.47 520.45L533.47 523.45L536.47 520.45L539.47 523.45L542.47 520.45L545.47 523.45L548.47 520.45L551.47 523.45L554.47 520.45L557.47 523.45L560.47 520.45L563.47 523.45L566.47 520.45L569.47 523.45L572.47 520.45L575.47 523.45L578.47 520.45L581.47 523.45L584.47 520.45L587.47 523.45L590.47 520.45L593.47 523.45L596.47 520.45L599.47 523.45" fill="none" stroke="#3a82ee" stroke-width="1.05"/></svg>
<svg class="i" style="left:602.78px;top:519.95px;overflow:hidden;" width="28.90" height="4" viewBox="602.78 519.95 28.90 4"><path d="M593.47 523.45L596.47 520.45L599.47 523.45L602.47 520.45L605.47 523.45L608.47 520.45L611.47 523.45L614.47 520.45L617.47 523.45L620.47 520.45L623.47 523.45L626.47 520.45L629.47 523.45L632.47 520.45L635.47 523.45" fill="none" stroke="#3a82ee" stroke-width="1.05"/></svg>
<svg class="i" style="left:342.72px;top:537.95px;overflow:hidden;" width="36.12" height="4" viewBox="342.72 537.95 36.12 4"><path d="M335.47 541.45L338.47 538.45L341.47 541.45L344.47 538.45L347.47 541.45L350.47 538.45L353.47 541.45L356.47 538.45L359.47 541.45L362.47 538.45L365.47 541.45L368.47 538.45L371.47 541.45L374.47 538.45L377.47 541.45L380.47 538.45L383.47 541.45" fill="none" stroke="#3a82ee" stroke-width="1.05"/></svg>
<svg class="i" style="left:465.53px;top:537.95px;overflow:hidden;" width="43.34" height="4" viewBox="465.53 537.95 43.34 4"><path d="M455.47 541.45L458.47 538.45L461.47 541.45L464.47 538.45L467.47 541.45L470.47 538.45L473.47 541.45L476.47 538.45L479.47 541.45L482.47 538.45L485.47 541.45L488.47 538.45L491.47 541.45L494.47 538.45L497.47 541.45L500.47 538.45L503.47 541.45L506.47 538.45L509.47 541.45L512.47 538.45" fill="none" stroke="#3a82ee" stroke-width="1.05"/></svg>
<svg class="i" style="left:653.35px;top:537.95px;overflow:hidden;" width="50.57" height="4" viewBox="653.35 537.95 50.57 4"><path d="M641.47 541.45L644.47 538.45L647.47 541.45L650.47 538.45L653.47 541.45L656.47 538.45L659.47 541.45L662.47 538.45L665.47 541.45L668.47 538.45L671.47 541.45L674.47 538.45L677.47 541.45L680.47 538.45L683.47 541.45L686.47 538.45L689.47 541.45L692.47 538.45L695.47 541.45L698.47 538.45L701.47 541.45L704.47 538.45L707.47 541.45" fill="none" stroke="#3a82ee" stroke-width="1.05"/></svg>
<svg class="i" style="left:458.30px;top:555.95px;overflow:hidden;" width="50.57" height="4" viewBox="458.30 555.95 50.57 4"><path d="M449.47 559.45L452.47 556.45L455.47 559.45L458.47 556.45L461.47 559.45L464.47 556.45L467.47 559.45L470.47 556.45L473.47 559.45L476.47 556.45L479.47 559.45L482.47 556.45L485.47 559.45L488.47 556.45L491.47 559.45L494.47 556.45L497.47 559.45L500.47 556.45L503.47 559.45L506.47 556.45L509.47 559.45L512.47 556.45" fill="none" stroke="#3a82ee" stroke-width="1.05"/></svg>
<svg class="i" style="left:544.99px;top:573.95px;overflow:hidden;" width="43.34" height="4" viewBox="544.99 573.95 43.34 4"><path d="M533.47 577.45L536.47 574.45L539.47 577.45L542.47 574.45L545.47 577.45L548.47 574.45L551.47 577.45L554.47 574.45L557.47 577.45L560.47 574.45L563.47 577.45L566.47 574.45L569.47 577.45L572.47 574.45L575.47 577.45L578.47 574.45L581.47 577.45L584.47 574.45L587.47 577.45L590.47 574.45L593.47 577.45" fill="none" stroke="#3a82ee" stroke-width="1.05"/></svg>
<svg class="i" style="left:595.56px;top:573.95px;overflow:hidden;" width="50.57" height="4" viewBox="595.56 573.95 50.57 4"><path d="M587.47 577.45L590.47 574.45L593.47 577.45L596.47 574.45L599.47 577.45L602.47 574.45L605.47 577.45L608.47 574.45L611.47 577.45L614.47 574.45L617.47 577.45L620.47 574.45L623.47 577.45L626.47 574.45L629.47 577.45L632.47 574.45L635.47 577.45L638.47 574.45L641.47 577.45L644.47 574.45L647.47 577.45L650.47 574.45" fill="none" stroke="#3a82ee" stroke-width="1.05"/></svg>
<svg class="i" style="left:718.37px;top:573.95px;overflow:hidden;" width="36.12" height="4" viewBox="718.37 573.95 36.12 4"><path d="M707.47 577.45L710.47 574.45L713.47 577.45L716.47 574.45L719.47 577.45L722.47 574.45L725.47 577.45L728.47 574.45L731.47 577.45L734.47 574.45L737.47 577.45L740.47 574.45L743.47 577.45L746.47 574.45L749.47 577.45L752.47 574.45L755.47 577.45L758.47 574.45" fill="none" stroke="#3a82ee" stroke-width="1.05"/></svg>
<svg class="i" style="left:342.72px;top:591.95px;overflow:hidden;" width="50.57" height="4" viewBox="342.72 591.95 50.57 4"><path d="M335.47 595.45L338.47 592.45L341.47 595.45L344.47 592.45L347.47 595.45L350.47 592.45L353.47 595.45L356.47 592.45L359.47 595.45L362.47 592.45L365.47 595.45L368.47 592.45L371.47 595.45L374.47 592.45L377.47 595.45L380.47 592.45L383.47 595.45L386.47 592.45L389.47 595.45L392.47 592.45L395.47 595.45L398.47 592.45" fill="none" stroke="#3a82ee" stroke-width="1.05"/></svg>
<svg class="i" style="left:451.08px;top:591.95px;overflow:hidden;" width="65.02" height="4" viewBox="451.08 591.95 65.02 4"><path d="M443.47 595.45L446.47 592.45L449.47 595.45L452.47 592.45L455.47 595.45L458.47 592.45L461.47 595.45L464.47 592.45L467.47 595.45L470.47 592.45L473.47 595.45L476.47 592.45L479.47 595.45L482.47 592.45L485.47 595.45L488.47 592.45L491.47 595.45L494.47 592.45L497.47 595.45L500.47 592.45L503.47 595.45L506.47 592.45L509.47 595.45L512.47 592.45L515.47 595.45L518.47 592.45L521.47 595.45" fill="none" stroke="#3a82ee" stroke-width="1.05"/></svg>
<div class="b" style="left:817.92px;top:90.57px;width:13.48px;height:498.32px;background:#1f1f1f;border-left:1px solid #282828;border-top:1px solid #282828;box-sizing:border-box;"></div>
<div class="b" style="left:826.82px;top:152.70px;width:4.58px;height:8.09px;background:#4a88ee;"></div>
<div class="b" style="left:826.82px;top:168.33px;width:4.58px;height:23.32px;background:#4a88ee;"></div>
<div class="b" style="left:826.82px;top:198.65px;width:4.58px;height:54.45px;background:#4a88ee;"></div>
<div class="b" style="left:826.82px;top:260.65px;width:4.58px;height:45.82px;background:#4a88ee;"></div>
<div class="b" style="left:826.82px;top:314.56px;width:4.58px;height:68.46px;background:#4a88ee;"></div>
<div class="b" style="left:818.60px;top:375.20px;width:12.80px;height:1.48px;background:#a0a0a0;"></div>
<div class="b" style="left:0.00px;top:588.88px;width:831.40px;height:22.17px;background:#181818;"></div>
<div class="b" style="left:0.00px;top:588.88px;width:831.40px;height:1.00px;background:#2b2b2b;"></div>
<div class="b" style="left:0.00px;top:589.82px;width:34.10px;height:21.23px;background:#3377d9;"></div>
<svg class="i" style="left:9.48px;top:593.04px;color:#ffffff;" width="15" height="15" viewBox="0 0 16 16" fill="none" stroke="currentColor" stroke-width="1.25" stroke-linecap="round" stroke-linejoin="round"><path d="M4.700 5.600L8.300 9.300 4.800 13.500M12.700 1.800L9.200 5.600l3.500 3.700" /></svg>
<svg class="i" style="left:41.25px;top:593.54px;color:#cccccc;" width="14" height="14" viewBox="0 0 16 16" fill="none" stroke="currentColor" stroke-width="1.15" stroke-linecap="round" stroke-linejoin="round"><circle cx="3.500" cy="2.300" r="1.900"/><circle cx="3.500" cy="13.200" r="1.900"/><circle cx="11.100" cy="5.200" r="1.900"/><path d="M3.500 4.200v7.100M11.100 7.100c0 3.200-7.600 1.700-7.600 4.200"/></svg>
<span class="t " style="left:57.95px;top:591.82px;font-size:12.40px;letter-spacing:0.426px;color:#cccccc;">new-blog-post*</span>
<svg class="i" style="left:152.90px;top:592.79px;color:#cccccc;" width="15.5" height="15.5" viewBox="0 0 16 16" fill="none" stroke="currentColor" stroke-width="1.1" stroke-linecap="round" stroke-linejoin="round"><path d="M4.500 11.500h-1a2.500 2.500 0 0 1-.3-5 4 4 0 0 1 7.800-1 3 3 0 0 1 1.500 5.800"/><path d="M8 14V8.500M6 10.500l2-2 2 2"/></svg>
<svg class="i" style="left:180.79px;top:592.79px;color:#cccccc;" width="15.5" height="15.5" viewBox="0 0 16 16" fill="none" stroke="currentColor" stroke-width="1.1" stroke-linecap="round" stroke-linejoin="round"><circle cx="8" cy="8" r="6"/><path d="M5.800 5.800l4.400 4.400M10.200 5.800l-4.400 4.400"/></svg>
<span class="t " style="left:198.92px;top:591.82px;font-size:12.40px;letter-spacing:0.000px;color:#cccccc;">0</span>
<svg class="i" style="left:209.50px;top:592.79px;color:#cccccc;" width="15.5" height="15.5" viewBox="0 0 16 16" fill="none" stroke="currentColor" stroke-width="1.1" stroke-linecap="round" stroke-linejoin="round"><path d="M8 2.200L14.200 13.500H1.800z"/><path d="M8 6.500v3.500M8 11.600v.2"/></svg>
<span class="t " style="left:227.49px;top:591.82px;font-size:12.40px;letter-spacing:0.000px;color:#cccccc;">0</span>
<svg class="i" style="left:236.45px;top:592.79px;color:#cccccc;" width="15.5" height="15.5" viewBox="0 0 16 16" fill="none" stroke="currentColor" stroke-width="1.1" stroke-linecap="round" stroke-linejoin="round"><circle cx="8" cy="8" r="6"/><path d="M8 7.500v3.500M8 5v.2"/></svg>
<span class="t " style="left:254.45px;top:591.82px;font-size:12.40px;letter-spacing:1.459px;color:#cccccc;">79</span>
<svg class="i" style="left:287.36px;top:593.29px;color:#cccccc;" width="14.5" height="14.5" viewBox="0 0 16 16" fill="none" stroke="currentColor" stroke-width="1.0" stroke-linecap="round" stroke-linejoin="round"><path d="M8 6.500v8M5.500 14.500L8 8l2.500 6.500M6.300 12h3.400"/><circle cx="8" cy="6" r="1"/><path d="M4.800 9.200a4.500 4.500 0 0 1 0-6.400M11.200 9.200a4.500 4.500 0 0 0 0-6.400M3 10.800a7 7 0 0 1 0-9.600M13 10.800a7 7 0 0 0 0-9.600" /></svg>
<span class="t " style="left:304.58px;top:591.82px;font-size:12.40px;letter-spacing:0.000px;color:#cccccc;">0</span>
<span class="t " style="left:394.34px;top:591.82px;font-size:12.40px;letter-spacing:0.207px;color:#cccccc;">Ln 15, Col 525</span>
<span class="t " style="left:494.07px;top:591.82px;font-size:12.40px;letter-spacing:0.042px;color:#cccccc;">Spaces: 4</span>
<span class="t " style="left:566.31px;top:591.82px;font-size:12.40px;letter-spacing:0.198px;color:#cccccc;">UTF-8</span>
<span class="t " style="left:618.87px;top:591.82px;font-size:12.40px;letter-spacing:-0.632px;color:#cccccc;">LF</span>
<span class="t " style="left:648.52px;top:591.82px;font-size:12.40px;letter-spacing:0.094px;color:#cccccc;">Markdown</span>
<svg class="i" style="left:722.44px;top:592.79px;color:#cccccc;" width="15.5" height="15.5" viewBox="0 0 16 16" fill="none" stroke="currentColor" stroke-width="1.1" stroke-linecap="round" stroke-linejoin="round"><path d="M8 2.200L14.200 13.500H1.800z"/><path d="M8 6.500v3.500M8 11.600v.2"/></svg>
<span class="t " style="left:740.43px;top:591.82px;font-size:12.40px;letter-spacing:0.227px;color:#cccccc;">79 Spell</span>
<svg class="i" style="left:801.68px;top:592.79px;color:#cccccc;" width="15.5" height="15.5" viewBox="0 0 16 16" fill="none" stroke="currentColor" stroke-width="1.1" stroke-linecap="round" stroke-linejoin="round"><path d="M8 2a4 4 0 0 0-4 4v3.500L2.800 11.500h10.400L12 9.500V6a4 4 0 0 0-4-4zM6.500 13.500a1.500 1.500 0 0 0 3 0"/></svg>
</div></div>
</body></html>
